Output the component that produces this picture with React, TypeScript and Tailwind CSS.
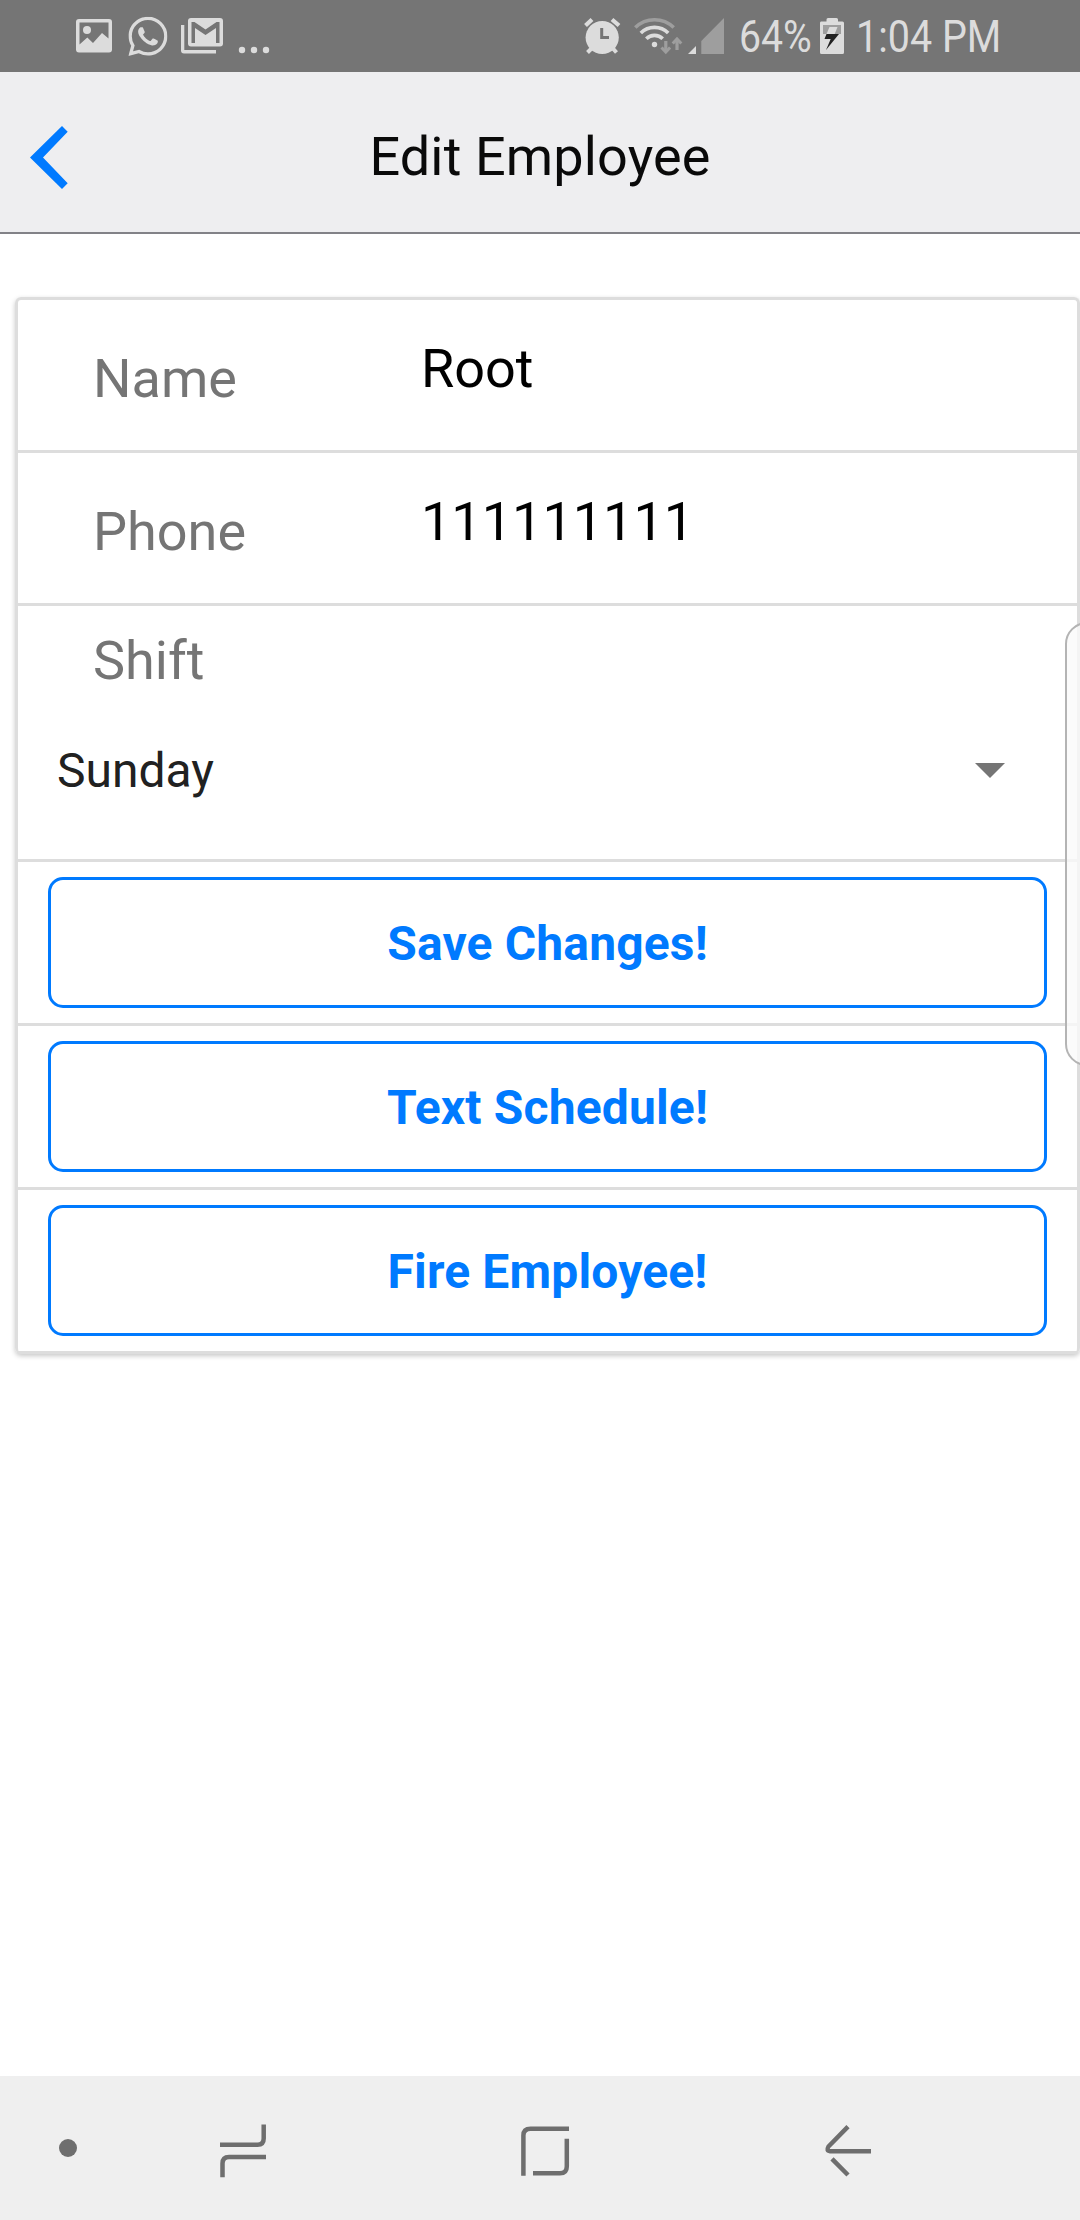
import type { ReactNode } from "react";

function StatusBar() {
  return (
    <div className="flex h-[72px] w-full shrink-0 items-start bg-[#757575] text-[44.6px] leading-[75px] text-[#dcdcdc]">
      <svg className="ml-[70px] h-[72px] w-[210px] shrink-0" viewBox="70 0 210 72" fill="#dcdcdc">
        <path
          fillRule="evenodd"
          d="M79 19H109Q112 19 112 22V49.500Q112 52.500 109 52.500H79Q76 52.500 76 49.500V22Q76 19 79 19ZM79.500 22.500V44.500L87.300 37.500L93 43L102 33L108.500 38.500V22.500Z"
        />
        <circle cx="87" cy="30" r="4" />
        <svg x="128.300" y="16.700" width="39.200" height="39.200" viewBox="0 0 24 24">
          <path d="M17.472 14.382c-.297-.149-1.758-.867-2.030-.967-.273-.099-.471-.148-.670.150-.197.297-.767.966-.940 1.164-.173.199-.347.223-.644.075-.297-.150-1.255-.463-2.390-1.475-.883-.788-1.480-1.761-1.653-2.059-.173-.297-.018-.458.130-.606.134-.133.298-.347.446-.520.149-.174.198-.298.298-.497.099-.198.050-.371-.025-.520-.075-.149-.669-1.612-.916-2.207-.242-.579-.487-.500-.669-.510-.173-.008-.371-.010-.570-.010-.198 0-.520.074-.792.372-.272.297-1.040 1.016-1.040 2.479 0 1.462 1.065 2.875 1.213 3.074.149.198 2.096 3.200 5.077 4.487.709.306 1.262.489 1.694.625.712.227 1.360.195 1.871.118.571-.085 1.758-.719 2.006-1.413.248-.694.248-1.289.173-1.413-.074-.124-.272-.198-.570-.347m-5.421 7.403h-.004a9.870 9.870 0 01-5.031-1.378l-.361-.214-3.741.982.998-3.648-.235-.374a9.860 9.860 0 01-1.510-5.260c.001-5.450 4.436-9.884 9.888-9.884 2.640 0 5.122 1.030 6.988 2.898a9.825 9.825 0 012.893 6.994c-.003 5.450-4.437 9.884-9.885 9.884m8.413-18.297A11.815 11.815 0 0012.050 0C5.495 0 .160 5.335.157 11.892c0 2.096.547 4.142 1.588 5.945L.057 24l6.305-1.654a11.882 11.882 0 005.683 1.448h.005c6.554 0 11.890-5.335 11.893-11.893a11.821 11.821 0 00-3.480-8.413z" />
        </svg>
        <path d="M181 25H184.300V50H216V53.500H184Q181 53.500 181 50.500Z" />
        <path
          fillRule="evenodd"
          d="M191 18H220Q223 18 223 21V43.500Q223 46.500 220 46.500H191Q188 46.500 188 43.500V21Q188 18 191 18ZM191.500 22V43H195V28L205.500 35L216 28V43H219.500V22H216.500L205.500 29.500L194.500 22Z"
        />
        <circle cx="242" cy="50" r="3.200" />
        <circle cx="254" cy="50" r="3.200" />
        <circle cx="266" cy="50" r="3.200" />
      </svg>
      <svg className="ml-[300px] h-[72px] w-[150px] shrink-0" viewBox="580 0 150 72" fill="none">
        <circle cx="602.200" cy="37.500" r="16.600" fill="#dcdcdc" />
        <path d="M585.500 25.500L592 19.500M612 19.500L619 25.500" stroke="#dcdcdc" strokeWidth="4.200" />
        <path d="M592 48L587.500 52.500M612.500 48L616.500 52.500" stroke="#dcdcdc" strokeWidth="4" />
        <path d="M601.700 28V37.500H609" stroke="#757575" strokeWidth="3" />
        <path d="M635.300 27.500A27.500 27.500 0 0 1 673.700 27.500" stroke="#9e9e9e" strokeWidth="3.600" />
        <path d="M640.800 33A19.500 19.500 0 0 1 668.200 33" stroke="#dcdcdc" strokeWidth="3.600" />
        <path d="M646.300 38.800A11.500 11.500 0 0 1 662.700 38.800" stroke="#dcdcdc" strokeWidth="3.600" />
        <circle cx="654.500" cy="44.500" r="2.700" fill="#dcdcdc" />
        <path d="M665.800 41V50M677 50V41" stroke="#9e9e9e" strokeWidth="3.200" />
        <path d="M661.500 47.500L665.800 52L670.100 47.500M672.700 43.500L677 39L681.300 43.500" stroke="#9e9e9e" strokeWidth="3" />
        <path d="M688 54L696 46V54Z" fill="#dcdcdc" />
        <path d="M701.300 54V41L724 18V54Z" fill="#9e9e9e" />
      </svg>
      <span className="ml-[9px] w-[78px] origin-left scale-x-[0.880] whitespace-nowrap">64%</span>
      <svg className="ml-[1px] h-[72px] w-[28px] shrink-0" viewBox="817 0 28 72">
        <path d="M820 21.500H825.500V19.500Q825.500 18 827 18H835.500Q837 18 837 19.500V21.500H841.500Q843 21.500 843 23V52.500Q843 54 841.500 54H820.500Q819 54 819 52.500V23Q819 21.500 820 21.500Z" fill="#dcdcdc" />
        <path d="M822 25H840V34H822Z" fill="#9e9e9e" />
        <path d="M828.500 27H836.500L833.700 34H825.500Z" fill="#dcdcdc" />
        <path d="M825.500 34H838L825 50L829.700 39H823.500Z" fill="#222" />
      </svg>
      <span className="ml-[10px] origin-left scale-x-[0.885] whitespace-nowrap">1:04 PM</span>
    </div>
  );
}

function Header() {
  return (
    <header className="flex h-[162px] shrink-0 border-b-2 border-[#828287] bg-[#eeeef0]">
      <svg className="mt-[50px] ml-[26px] h-[70px] w-[46px] shrink-0" viewBox="26 122 46 70">
        <path d="M30 157.500L62 126L67.700 131.800L43 157.500L67.700 183.200L62 189Z" fill="#007aff" />
      </svg>
      <h1 className="mr-[72px] flex-1 pt-[2px] text-center text-[54px] leading-[165px] tracking-[0.150px] text-[#0a0a0a]">Edit Employee</h1>
    </header>
  );
}

function Field({ label, value }: { label: string; value: string }) {
  return (
    <div className="flex h-[153px] border-b-[3px] border-[#ddd] leading-[62px]">
      <span className="w-[329px] pt-[48px] pl-[75px] text-[#757575]">{label}</span>
      <span className="pt-[38px] pl-[74px] text-black">{value}</span>
    </div>
  );
}

function ButtonRow({ children }: { children: ReactNode }) {
  return (
    <div className="h-[164px] border-b-[3px] border-[#ddd] px-[30px] pt-[15px]">
      <button className="flex h-[131px] w-full items-center justify-center rounded-[15px] border-[3px] border-[#007aff] pt-[3px] text-[48px] font-bold tracking-[0.150px] text-[#007aff]">
        {children}
      </button>
    </div>
  );
}

function NavBar() {
  return (
    <nav className="mt-auto h-[144px] shrink-0 bg-[#efefef]">
      <svg className="h-[144px] w-[1080px]" viewBox="0 2076 1080 144" fill="none" stroke="#6e6e6e" strokeWidth="4.500">
        <circle cx="68" cy="2148" r="9" fill="#6e6e6e" stroke="none" />
        <path d="M220 2144.800H257.500Q263.700 2144.800 263.700 2138.500V2124.500M266 2157H229Q222.500 2157 222.500 2163.500V2177.300" />
        <path d="M569 2128.700H530.500Q523.400 2128.700 523.400 2135.500V2175.700M533 2173.300H560Q566.800 2173.300 566.800 2166.500V2138.700" />
        <path d="M848 2126.700L828.500 2146.500Q826 2151 830 2151.200H871M832 2158.800L848 2175" />
      </svg>
    </nav>
  );
}

export default function App() {
  return (
    <div className="relative flex h-[2220px] w-[1080px] flex-col overflow-hidden bg-white font-[Roboto,sans-serif] text-[54px]">
      <StatusBar />
      <Header />
      <main className="mt-[63px] ml-[15px] rounded-[6px] border-x-[3px] border-t-[3px] border-[#ddd] shadow-[0_2px_5px_rgba(0,0,0,0.22)]">
        <Field label="Name" value="Root" />
        <Field label="Phone" value="111111111" />
        <section className="h-[256px] border-b-[3px] border-[#ddd] pt-[24px]">
          <div className="pl-[75px] leading-[62px] text-[#757575]">Shift</div>
          <div className="mt-[48px] flex items-center justify-between pr-[72px] pl-[39px] text-[48px] leading-[62px] text-[#212121]">
            <span>Sunday</span>
            <svg className="mb-[2px] h-[15px] w-[30px]" viewBox="0 0 30 15">
              <path d="M0 0H30L15 15Z" fill="#757575" />
            </svg>
          </div>
        </section>
        <ButtonRow>Save Changes!</ButtonRow>
        <ButtonRow>Text Schedule!</ButtonRow>
        <ButtonRow>Fire Employee!</ButtonRow>
      </main>
      <div className="absolute top-[622px] -right-[30px] h-[444px] w-[45px] rounded-[22px] border-2 border-[#b4b4b4] bg-[#fafafa]/80" />
      <NavBar />
    </div>
  );
}
